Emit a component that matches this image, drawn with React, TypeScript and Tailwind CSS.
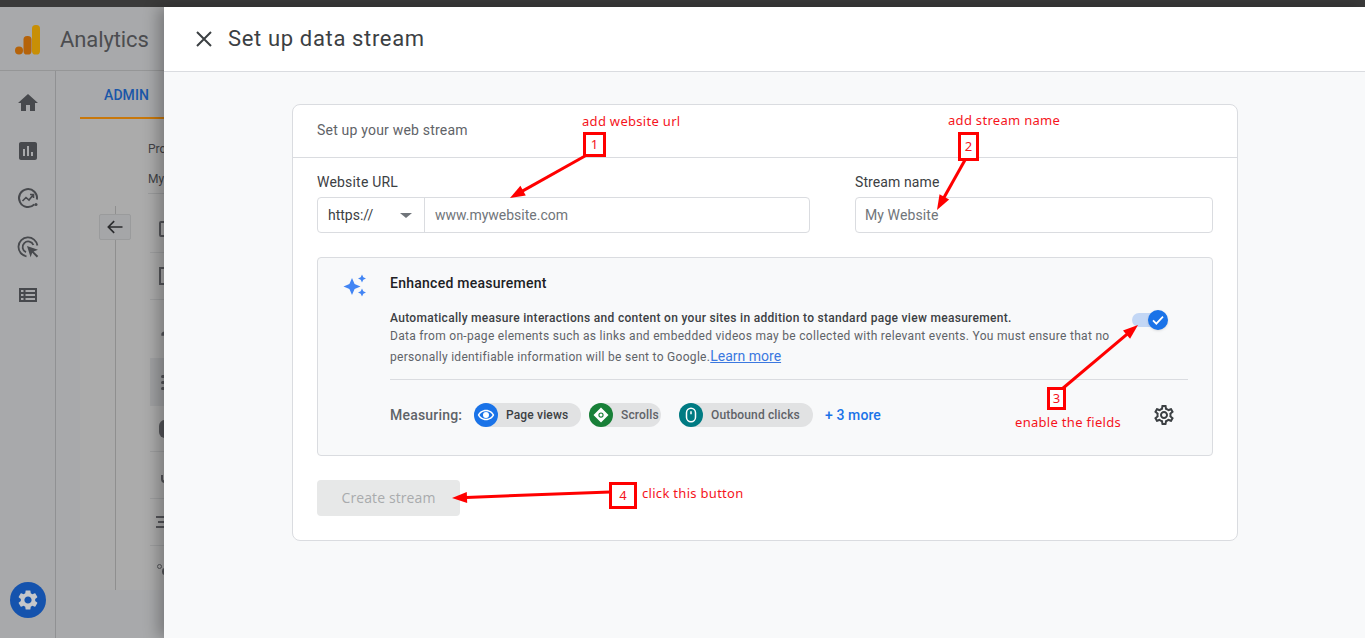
import type { ReactNode } from "react";

const GEAR =
  "M19.14 12.94c.04-.3.06-.61.06-.94 0-.32-.02-.64-.07-.94l2.03-1.58c.18-.14.23-.41.12-.61l-1.92-3.32c-.12-.22-.37-.29-.59-.22l-2.39.96c-.5-.38-1.03-.7-1.62-.94l-.36-2.54c-.04-.24-.24-.41-.48-.41h-3.84c-.24 0-.43.17-.47.41l-.36 2.54c-.59.24-1.13.57-1.62.94l-2.39-.96c-.22-.08-.47 0-.59.22L2.74 8.87c-.12.21-.08.47.12.61l2.03 1.58c-.05.3-.09.63-.09.94s.02.64.07.94l-2.03 1.58c-.18.14-.23.41-.12.61l1.92 3.32c.12.22.37.29.59.22l2.39-.96c.5.38 1.03.7 1.62.94l.36 2.54c.05.24.24.41.48.41h3.84c.24 0 .44-.17.47-.41l.36-2.54c.59-.24 1.13-.56 1.62-.94l2.39.96c.22.08.47 0 .59-.22l1.92-3.32c.12-.22.07-.47-.12-.61l-2.01-1.58zM12 15.6c-1.98 0-3.6-1.62-3.6-3.6s1.62-3.6 3.6-3.6 3.6 1.62 3.6 3.6-1.62 3.6-3.6 3.6z";

const GEAR_OUTLINE =
  "M19.43 12.98c.04-.32.07-.64.07-.98 0-.34-.03-.66-.07-.98l2.11-1.65c.19-.15.24-.42.12-.64l-2-3.46c-.09-.16-.26-.25-.44-.25-.06 0-.12.01-.17.03l-2.49 1c-.52-.4-1.08-.73-1.69-.98l-.38-2.65C14.46 2.18 14.25 2 14 2h-4c-.25 0-.46.18-.49.42l-.38 2.65c-.61.25-1.17.59-1.69.98l-2.49-1c-.06-.02-.12-.03-.18-.03-.17 0-.34.09-.43.25l-2 3.46c-.13.22-.07.49.12.64l2.11 1.65c-.04.32-.07.65-.07.98 0 .33.03.66.07.98l-2.11 1.65c-.19.15-.24.42-.12.64l2 3.46c.09.16.26.25.44.25.06 0 .12-.01.17-.03l2.49-1c.52.4 1.08.73 1.69.98l.38 2.65c.03.24.24.42.49.42h4c.25 0 .46-.18.49-.42l.38-2.65c.61-.25 1.17-.59 1.69-.98l2.49 1c.06.02.12.03.18.03.17 0 .34-.09.43-.25l2-3.46c.12-.22.07-.49-.12-.64l-2.11-1.65zm-1.98-1.71c.04.31.05.52.05.73 0 .21-.02.43-.05.73l-.14 1.13.89.7 1.08.84-.7 1.21-1.27-.51-1.04-.42-.9.68c-.43.32-.84.56-1.25.73l-1.06.43-.16 1.13-.2 1.35h-1.4l-.19-1.35-.16-1.13-1.06-.43c-.43-.18-.83-.41-1.23-.71l-.91-.7-1.06.43-1.27.51-.7-1.21 1.08-.84.89-.7-.14-1.13c-.03-.31-.05-.54-.05-.74s.02-.43.05-.73l.14-1.13-.89-.7-1.08-.84.7-1.21 1.27.51 1.04.42.9-.68c.43-.32.84-.56 1.25-.73l1.06-.43.16-1.13.2-1.35h1.39l.19 1.35.16 1.13 1.06.43c.43.18.83.41 1.23.71l.91.7 1.06-.43 1.27-.51.7 1.21-1.07.85-.89.7.14 1.13zM12 8c-2.21 0-4 1.79-4 4s1.79 4 4 4 4-1.79 4-4-1.79-4-4-4zm0 6c-1.1 0-2-.9-2-2s.9-2 2-2 2 .9 2 2-.9 2-2 2z";

function Icon({ className, children }: { className?: string; children: ReactNode }) {
  return (
    <svg viewBox="0 0 24 24" className={className} fill="currentColor">
      {children}
    </svg>
  );
}

function Logo() {
  return (
    <svg viewBox="0 0 26 30" className="w-[26px] h-[30px]">
      <rect x="17" y="0" width="8" height="29.5" rx="3.6" fill="#c88f05" />
      <rect x="8.5" y="11" width="8" height="18.5" rx="3.6" fill="#b5630a" />
      <circle cx="4" cy="25.5" r="4" fill="#b5630a" />
    </svg>
  );
}

function Rail() {
  return (
    <div className="w-[56px] shrink-0 border-r border-[#909193] flex flex-col items-center text-[#47494d]">
      <div className="flex flex-col items-center gap-[24px] pt-[20px]">
        <Icon className="w-[24px] h-[24px]">
          <path d="M10 20v-6h4v6h5v-8h3L12 3 2 12h3v8z" />
        </Icon>
        <Icon className="w-[24px] h-[24px]">
          <path d="M19 3H5c-1.1 0-2 .9-2 2v14c0 1.1.9 2 2 2h14c1.1 0 2-.9 2-2V5c0-1.1-.9-2-2-2zM9 17H7v-7h2v7zm4 0h-2V7h2v10zm4 0h-2v-4h2v4z" />
        </Icon>
        <svg viewBox="0 0 24 24" className="w-[24px] h-[24px]" fill="none" stroke="currentColor" strokeWidth="2">
          <path d="M18.400 17.400A9 9 0 1 1 20.900 12.500" />
          <path d="M6.500 14l3.500-3.500 3 2.500 4-5M14 7.500h3.500V11" strokeWidth="1.600" />
          <circle cx="20" cy="17.500" r="1.500" fill="currentColor" stroke="none" />
        </svg>
        <svg viewBox="0 0 24 24" className="w-[24px] h-[24px]" fill="none" stroke="currentColor" strokeWidth="1.800">
          <path d="M10.500 21.300A9.500 9.500 0 1 1 21.400 10.500" />
          <path d="M10 17.200A5.600 5.600 0 1 1 17.400 10" />
          <path d="M11 11l11 3.800-4.400 1.600 4.600 4.600-1.400 1.400-4.600-4.600-1.600 4.400z" fill="currentColor" stroke="none" />
        </svg>
        <Icon className="w-[24px] h-[24px]">
          <path d="M3 5v14h18V5H3zm2 2h2.500v2H5V7zm4.500 0H19v2H9.500V7zM5 11h2.500v2H5v-2zm4.500 0H19v2H9.500v-2zM5 15h2.500v2H5v-2zm4.500 0H19v2H9.500v-2z" fillRule="evenodd" />
        </Icon>
      </div>
      <div className="mt-auto mb-[20px] w-[36px] h-[36px] rounded-full bg-[#1553ad] flex items-center justify-center text-[#c5c7ca]">
        <Icon className="w-[24px] h-[24px]">
          <path d={GEAR} />
        </Icon>
      </div>
    </div>
  );
}

function SideRow({ h, border = true, active, children }: { h: string; border?: boolean; active?: boolean; children?: ReactNode }) {
  return (
    <div className={`${h} flex items-center pl-[9px] ${border ? "border-b border-[#9d9e9f]" : ""} ${active ? "bg-[#a0a1a3]" : ""}`}>
      {children}
    </div>
  );
}

function BehindMain() {
  return (
    <div className="flex-1 min-w-0 flex flex-col">
      <div className="h-[46px] pl-[48px] pt-[16px] shrink-0 text-[14px] leading-[16px] tracking-[0.1px] font-medium text-[#1a56a8] whitespace-nowrap">ADMIN</div>
      <div className="ml-[24px] h-[473px] shrink-0 border-t-[2px] border-[#c8770a] bg-[#ababab] flex">
        <div className="w-[68px] shrink-0 relative flex justify-center">
          <div className="w-px bg-[#8f8f8f] ml-[2px] mt-[87px]"></div>
          <div className="absolute left-[19px] top-[95px] w-[32px] h-[26px] rounded-[2px] border border-[#9a9b9c] bg-[#a5a6a8] flex items-center justify-center">
            <svg viewBox="0 0 24 24" className="w-[20px] h-[20px]" fill="none" stroke="#2b2c2e" strokeWidth="2">
              <path d="M21 12H4M11 5l-7 7 7 7" />
            </svg>
          </div>
        </div>
        <div className="flex-1 min-w-0">
          <div className="h-[75px] border-b border-[#9a9b9c] text-[12px] text-[#414246] whitespace-nowrap overflow-hidden pt-[22px]">
            <p className="leading-[16px]">Property</p>
            <p className="leading-[16px] mt-[14px]">My Website</p>
          </div>
          <div className="ml-[2px] overflow-hidden w-[100px]">
            <div className="h-[12px]"></div>
            <SideRow h="h-[47px]">
              <div className="w-[16px] h-[16px] rounded-[2px] border-2 border-[#55565a]"></div>
            </SideRow>
            <SideRow h="h-[47px]">
              <div className="w-[16px] h-[18px] border-2 border-[#55565a]"></div>
            </SideRow>
            <SideRow h="h-[58px]" border={false}>
              <Icon className="w-[20px] h-[20px] -ml-[1px] text-[#55565a]">
                <path d="M12 12a4 4 0 1 0 0-8 4 4 0 0 0 0 8zm0 2c-2.700 0-8 1.300-8 4v2h16v-2c0-2.700-5.300-4-8-4z" />
              </Icon>
            </SideRow>
            <SideRow h="h-[48px]" border={false} active>
              <div className="flex flex-col gap-[3px] text-[#55565a] ml-[2px]">
                <div className="w-[10px] h-[3px] rounded-full bg-current"></div>
                <div className="w-[12px] h-[3px] rounded-full bg-current"></div>
                <div className="w-[10px] h-[3px] rounded-full bg-current"></div>
              </div>
            </SideRow>
            <SideRow h="h-[46px]">
              <div className="w-[16px] h-[18px] rounded-[6px] bg-[#55565a]"></div>
            </SideRow>
            <SideRow h="h-[47px]">
              <div className="w-[10px] h-[8px] mt-[8px] ml-[2px] border-2 border-t-0 border-r-0 rounded-bl-[4px] border-[#55565a]"></div>
            </SideRow>
            <SideRow h="h-[47px]">
              <div className="-ml-[3px] flex flex-col gap-[3px]">
                <div className="w-[14px] h-[2px] bg-[#55565a]"></div>
                <div className="w-[10px] h-[2px] bg-[#55565a] ml-[2px]"></div>
                <div className="w-[12px] h-[2px] bg-[#55565a]"></div>
              </div>
            </SideRow>
            <SideRow h="h-[40px]" border={false}>
              <div className="-ml-[2px] w-[5px] h-[5px] rounded-full border border-[#55565a]"></div>
              <div className="w-[6px] h-[7px] mt-[10px] rounded-full border-2 border-[#55565a]"></div>
            </SideRow>
          </div>
        </div>
      </div>
    </div>
  );
}

function Chip({ bg, label, width, text, children }: { bg: string; label: string; width: string; text: string; children: ReactNode }) {
  return (
    <div className={`${width} h-[24px] rounded-full bg-[#e1e2e3] flex items-center`}>
      <div className={`${bg} w-[24px] h-[24px] rounded-full flex items-center justify-center text-white shrink-0`}>{children}</div>
      <span className={`ml-[8px] text-[12px] font-medium tracking-[0.15px] whitespace-nowrap ${text}`}>{label}</span>
    </div>
  );
}

function Enhanced() {
  return (
    <div className="mt-[24px] h-[199px] border border-[#dadce0] rounded-[4px] bg-[#f8f9fa] flex">
      <div className="w-[72px] shrink-0 pl-[25px] pt-[15px]">
        <svg viewBox="0 0 24 24" className="w-[24px] h-[25px]" fill="#4285f4">
          <path d="M9 4.500l2.600 5.900 5.900 2.600-5.900 2.600L9 21.500l-2.600-5.900L.5 13l5.900-2.600zM19 1l1.300 2.700L23 5l-2.700 1.300L19 9l-1.300-2.700L15 5l2.700-1.300zM19 15l1.300 2.700L23 19l-2.700 1.300L19 23l-1.300-2.700L15 19l2.700-1.300z" />
        </svg>
      </div>
      <div className="flex-1 pr-[24px] min-w-0">
        <p className="pt-[16px] text-[14px] leading-[18px] tracking-[0.25px] font-medium text-[#202124]">Enhanced measurement</p>
        <div className="mt-[17px] flex items-start">
          <div className="w-[735px] text-[12px] tracking-[0.3px] text-[#5f6368] shrink-0">
            <p className="leading-[18px] font-medium text-[#3c4043]">Automatically measure interactions and content on your sites in addition to standard page view measurement.</p>
            <p className="leading-[18px] whitespace-nowrap">Data from on-page elements such as links and embedded videos may be collected with relevant events. You must ensure that no</p>
            <p className="mt-[1px] leading-[20px] whitespace-nowrap">
              personally identifiable information will be sent to Google.
              <span className="text-[14px] tracking-normal text-[#3b78e0] underline">Learn more</span>
            </p>
          </div>
          <div className="ml-[7px] mt-[1px] relative w-[36px] h-[20px] shrink-0">
            <div className="mt-[3px] w-[28px] h-[14px] rounded-full bg-[#c3d7f5]"></div>
            <div className="absolute left-[16px] top-0 w-[20px] h-[20px] rounded-full bg-[#1a73e8] flex items-center justify-center text-white shadow-sm">
              <svg viewBox="0 0 24 24" className="w-[16px] h-[16px]" fill="none" stroke="currentColor" strokeWidth="2.600">
                <path d="M4.500 12.500l5 5L19.500 7" />
              </svg>
            </div>
          </div>
        </div>
        <div className="mt-[12px] border-t border-[#dadce0] pt-[23px] flex items-center">
          <span className="w-[84px] text-[14px] tracking-[0.2px] font-medium text-[#5f6368] whitespace-nowrap">Measuring:</span>
          <div className="flex items-center gap-[8px]">
            <Chip bg="bg-[#1a73e8]" label="Page views" width="w-[107px]" text="text-[#3c4043]">
              <Icon className="w-[18px] h-[18px]">
                <path d="M12 5C7 5 2.700 8.100 1 12c1.700 3.900 6 7 11 7s9.300-3.100 11-7c-1.700-3.900-6-7-11-7zm0 12c-3.800 0-7.200-2-8.800-5C4.800 9 8.200 7 12 7s7.200 2 8.800 5c-1.600 3-5 5-8.800 5zm0-9a4 4 0 1 0 0 8 4 4 0 0 0 0-8z" />
              </Icon>
            </Chip>
            <Chip bg="bg-[#188038]" label="Scrolls" width="w-[72px] mr-[10px]" text="text-[#5f6368]">
              <Icon className="w-[18px] h-[18px]">
                <path fillRule="evenodd" d="M12 2l10 10-10 10L2 12zM12 8.500a3.500 3.500 0 1 0 0 7 3.500 3.500 0 0 0 0-7zM12 10a2 2 0 1 1 0 4 2 2 0 0 1 0-4z" />
              </Icon>
            </Chip>
            <Chip bg="bg-[#007b83]" label="Outbound clicks" width="w-[134px]" text="text-[#5f6368]">
              <svg viewBox="0 0 24 24" className="w-[18px] h-[18px]" fill="none" stroke="currentColor" strokeWidth="2">
                <rect x="6" y="3" width="12" height="18" rx="6" />
                <path d="M12 7v4" />
              </svg>
            </Chip>
          </div>
          <span className="ml-[12px] text-[14px] tracking-[0.1px] font-medium text-[#1a73e8] whitespace-nowrap">+ 3 more</span>
          <Icon className="ml-auto mr-[12px] w-[24px] h-[24px] text-[#3c4043]">
            <path d={GEAR_OUTLINE} />
          </Icon>
        </div>
      </div>
    </div>
  );
}

function Card() {
  return (
    <div className="ml-[128px] mt-[32px] w-[946px] h-[437px] rounded-[8px] border border-[#dadce0] bg-white">
      <div className="h-[53px] border-b border-[#dadce0] pl-[24px] pb-[2px] flex items-center text-[14px] tracking-[0.2px] text-[#5f6368]">Set up your web stream</div>
      <div className="px-[24px] pt-[16px]">
        <div className="flex gap-[45px]">
          <div className="w-[493px]">
            <p className="text-[14px] leading-[16px] tracking-[0.2px] text-[#3c4043]">Website URL</p>
            <div className="mt-[7px] h-[36px] rounded-[4px] border border-[#dadce0] flex items-center text-[14px]">
              <div className="w-[107px] h-full border-r border-[#dadce0] flex items-center pl-[10px] pr-[12px] justify-between text-[#3c4043]">
                <span>https://</span>
                <span className="border-x-[6px] border-t-[5px] border-x-transparent border-t-[#70757a] w-0 h-0"></span>
              </div>
              <span className="pl-[10px] text-[#70757a]">www.mywebsite.com</span>
            </div>
          </div>
          <div className="w-[358px]">
            <p className="text-[14px] leading-[16px] tracking-[0.1px] text-[#3c4043]">Stream name</p>
            <div className="mt-[7px] h-[36px] rounded-[4px] border border-[#dadce0] flex items-center pl-[9px] text-[14px] tracking-[0.1px] text-[#70757a]">My Website</div>
          </div>
        </div>
        <Enhanced />
        <button className="mt-[24px] w-[143px] h-[36px] pb-[2px] rounded-[4px] bg-[#e7e8e8] text-[14px] tracking-[0.1px] font-medium text-[#a9abad] [font-family:'Open_Sans',sans-serif]">Create stream</button>
      </div>
    </div>
  );
}

function Note({ className, children }: { className: string; children: ReactNode }) {
  return <div className={`absolute text-[13px] leading-[16px] text-[#f5141c] tracking-[0.3px] whitespace-nowrap [font-family:'Noto_Sans',sans-serif] ${className}`}>{children}</div>;
}

function NumBox({ className, children }: { className: string; children: ReactNode }) {
  return <div className={`absolute border-[3px] border-[#ff0000] bg-white flex items-center justify-center text-[13px] text-[#f5141c] [font-family:'Noto_Sans',sans-serif] ${className}`}>{children}</div>;
}

function Arrow({ x1, y1, x2, y2 }: { x1: number; y1: number; x2: number; y2: number }) {
  const a = Math.atan2(y2 - y1, x2 - x1);
  const p = (d: number, o: number) => `${x2 - d * Math.cos(a) - o * Math.sin(a)},${y2 - d * Math.sin(a) + o * Math.cos(a)}`;
  return (
    <>
      <line x1={x1} y1={y1} x2={x2 - 8 * Math.cos(a)} y2={y2 - 8 * Math.sin(a)} stroke="#ff0000" strokeWidth="3" />
      <polygon points={`${x2},${y2} ${p(15, 5.5)} ${p(15, -5.5)}`} fill="#ff0000" />
    </>
  );
}

function Annotations() {
  return (
    <>
      <svg className="absolute inset-0 w-[1365px] h-[638px] pointer-events-none" viewBox="0 0 1365 638">
        <Arrow x1={585} y1={156} x2={510} y2={198} />
        <Arrow x1={965} y1={160} x2={937} y2={210} />
        <Arrow x1={1062} y1={389} x2={1138} y2={325} />
        <Arrow x1={610} y1={492} x2={452} y2={498} />
      </svg>
      <Note className="left-[582px] top-[113px]">add website url</Note>
      <Note className="left-[948px] top-[112px]">add stream name</Note>
      <Note className="left-[1015px] top-[414px]">enable the fields</Note>
      <Note className="left-[642px] top-[485px]">click this button</Note>
      <NumBox className="left-[583px] top-[132px] w-[23px] h-[25px]">1</NumBox>
      <NumBox className="left-[958px] top-[132px] w-[21px] h-[29px]">2</NumBox>
      <NumBox className="left-[1047px] top-[387px] w-[19px] h-[23px]">3</NumBox>
      <NumBox className="left-[609px] top-[482px] w-[28px] h-[27px]">4</NumBox>
    </>
  );
}

export default function App() {
  return (
    <div className="relative w-[1365px] h-[638px] overflow-hidden bg-white [font-family:Roboto,sans-serif]">
      <div className="h-[7px] bg-[#3a3a3a]"></div>
      <div className="flex h-[631px]">
        <div className="w-[164px] shrink-0 bg-[#a8a9ab] overflow-hidden flex flex-col">
          <div className="h-[64px] shrink-0 border-b border-[#959697] flex items-center pl-[15px] pt-[2px]">
            <Logo />
            <span className="ml-[19px] text-[22px] tracking-[-0.1px] text-[#4c4d50] whitespace-nowrap">Analytics</span>
          </div>
          <div className="flex-1 flex min-h-0">
            <Rail />
            <BehindMain />
          </div>
        </div>
        <div className="relative flex-1 flex flex-col bg-[#f8f9fa] shadow-[-6px_0_14px_rgba(0,0,0,0.28)]">
          <div className="h-[65px] shrink-0 bg-white border-b border-[#dadce0] flex items-center">
            <svg viewBox="0 0 24 24" className="ml-[28px] w-[24px] h-[24px] text-[#3c4043]" fill="none" stroke="currentColor" strokeWidth="2">
              <path d="M5 5l14 14M19 5L5 19" />
            </svg>
            <span className="ml-[12px] text-[22px] text-[#3c4043] tracking-[0.65px] pb-[2px]">Set up data stream</span>
          </div>
          <Card />
        </div>
      </div>
      <Annotations />
    </div>
  );
}
